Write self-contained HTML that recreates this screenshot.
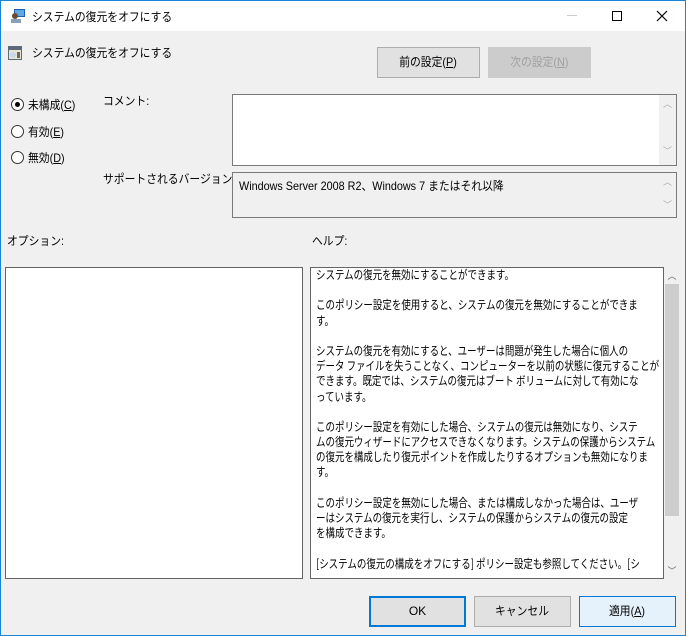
<!DOCTYPE html>
<html><head><meta charset="utf-8"><style>
*{margin:0;padding:0;box-sizing:border-box}
body{width:686px;height:636px;overflow:hidden;font-family:"Liberation Sans","Noto Sans CJK JP",sans-serif;font-size:12px;color:#000;}
#win{position:absolute;left:0;top:0;width:686px;height:636px;border:1px solid #1883d7;background:#f0f0f0}
.a{position:absolute;white-space:nowrap}
.n{transform:scaleX(0.9);transform-origin:left center}
#title{position:absolute;left:0;top:0;width:684px;height:30px;background:#fff}
.box{position:absolute;border:1px solid #7a7a7a;background:#fff}
.btn{position:absolute;background:#e1e1e1;border:1px solid #adadad;text-align:center;font-size:12px}
.radio{position:absolute;width:13px;height:13px;border:1px solid #333;border-radius:50%;background:#fff}
u{text-decoration:underline}
.sb{position:absolute;background:#f0f0f0;color:#aaa;font-size:9px;text-align:center}
#help{position:absolute;left:5px;top:-1px;width:440px;transform:scaleX(0.79);transform-origin:left top;font-family:"Noto Sans CJK JP",sans-serif}
#help div{height:15.2px;line-height:15.2px;white-space:pre;overflow:visible}
</style></head><body><div id="win">
<div id="title">
<svg class="a" style="left:9px;top:7px" width="16" height="16"><rect x="4" y="1" width="11" height="8" fill="#1e5fb0"/><rect x="5" y="2" width="9" height="6" fill="#5fa8e8"/><circle cx="5" cy="8" r="3" fill="#6b4b2e"/><rect x="1" y="11" width="10" height="4" fill="#8aa0b8"/></svg>
<div class="a n" style="left:31px;top:7px">システムの復元をオフにする</div>
<div class="a" style="left:566px;top:14px;width:10px;height:1px;background:#ccc"></div>
<div class="a" style="left:611px;top:10px;width:10px;height:10px;border:1px solid #000"></div>
<svg class="a" style="left:655px;top:9px" width="12" height="12"><path d="M1 1L11 11M11 1L1 11" stroke="#000" stroke-width="1.2"/></svg>
</div>
<svg class="a" style="left:6px;top:44px" width="16" height="16"><rect x="1" y="1" width="14" height="14" fill="#5a6a7a"/><rect x="2" y="5" width="12" height="9" fill="#e8e4d0"/><circle cx="6" cy="10" r="3" fill="#c8d8e8"/><rect x="10" y="7" width="3" height="6" fill="#666"/></svg>
<div class="a n" style="left:31px;top:43px">システムの復元をオフにする</div>
<div class="btn" style="left:376px;top:46px;width:103px;height:31px;line-height:29px"><span class="n" style="display:inline-block;transform-origin:center">前の設定(<u>P</u>)</span></div>
<div class="btn" style="left:487px;top:46px;width:103px;height:31px;line-height:29px;background:#ccc;border-color:#ccc;color:#a0a0a0"><span class="n" style="display:inline-block;transform-origin:center">次の設定(<u>N</u>)</span></div>

<div class="radio" style="left:10px;top:97px"><div style="position:absolute;left:3px;top:3px;width:5px;height:5px;border-radius:50%;background:#000"></div></div>
<div class="a n" style="left:27px;top:95px">未構成(<u>C</u>)</div>
<div class="radio" style="left:10px;top:124px"></div>
<div class="a n" style="left:27px;top:122px">有効(<u>E</u>)</div>
<div class="radio" style="left:10px;top:150px"></div>
<div class="a n" style="left:27px;top:148px">無効(<u>D</u>)</div>

<div class="a n" style="left:102px;top:91px">コメント:</div>
<div class="a n" style="left:102px;top:169px">サポートされるバージョン:</div>
<div class="box" style="left:231px;top:93px;width:445px;height:72px">
<div class="sb" style="right:0;top:0;width:17px;height:70px"><div style="margin-top:2px">︿</div><div style="margin-top:34px">﹀</div></div></div>
<div class="box" style="left:231px;top:171px;width:445px;height:46px;background:#f0f0f0">
<div class="a n" style="left:6px;top:4px">Windows Server 2008 R2、Windows 7 またはそれ以降</div>
<div class="sb" style="right:0;top:0;width:17px;height:44px"><div style="margin-top:2px">︿</div><div style="margin-top:10px">﹀</div></div></div>

<div class="a n" style="left:6px;top:231px">オプション:</div>
<div class="a n" style="left:311px;top:231px">ヘルプ:</div>
<div class="box" style="left:4px;top:266px;width:298px;height:312px;border-color:#646464"></div>
<div class="box" style="left:309px;top:266px;width:354px;height:312px;border-color:#646464;overflow:hidden">
<div id="help">
<div>システムの復元を無効にすることができます。</div>
<div> </div>
<div>このポリシー設定を使用すると、システムの復元を無効にすることができま</div>
<div>す。</div>
<div> </div>
<div>システムの復元を有効にすると、ユーザーは問題が発生した場合に個人の</div>
<div>データ ファイルを失うことなく、コンピューターを以前の状態に復元することが</div>
<div>できます。既定では、システムの復元はブート ボリュームに対して有効にな</div>
<div>っています。</div>
<div> </div>
<div>このポリシー設定を有効にした場合、システムの復元は無効になり、システ</div>
<div>ムの復元ウィザードにアクセスできなくなります。システムの保護からシステム</div>
<div>の復元を構成したり復元ポイントを作成したりするオプションも無効になりま</div>
<div>す。</div>
<div> </div>
<div>このポリシー設定を無効にした場合、または構成しなかった場合は、ユーザ</div>
<div>ーはシステムの復元を実行し、システムの保護からシステムの復元の設定</div>
<div>を構成できます。</div>
<div> </div>
<div>[システムの復元の構成をオフにする] ポリシー設定も参照してください。[シ</div>
</div></div>
<div class="sb" style="left:663px;top:266px;width:16px;height:312px;color:#666"><div style="margin-top:2px">︿</div><div style="position:absolute;left:1px;top:17px;width:14px;height:232px;background:#cdcdcd"></div><div style="position:absolute;bottom:2px;width:16px">﹀</div></div>

<div class="btn" style="left:368px;top:595px;width:97px;height:31px;line-height:27px;border:2px solid #0078d7">OK</div>
<div class="btn" style="left:473px;top:595px;width:97px;height:31px;line-height:29px"><span class="n" style="display:inline-block;transform-origin:center">キャンセル</span></div>
<div class="btn" style="left:578px;top:595px;width:97px;height:31px;line-height:29px;background:#e5f1fb;border-color:#0078d7"><span class="n" style="display:inline-block;transform-origin:center">適用(<u>A</u>)</span></div>
</div></body></html>
